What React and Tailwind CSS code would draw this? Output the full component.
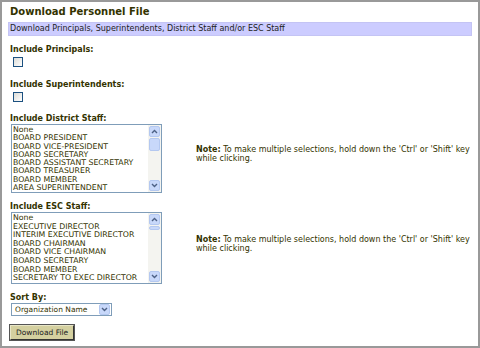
import React from 'react';

const districtStaff = [
  'None',
  'BOARD PRESIDENT',
  'BOARD VICE-PRESIDENT',
  'BOARD SECRETARY',
  'BOARD ASSISTANT SECRETARY',
  'BOARD TREASURER',
  'BOARD MEMBER',
  'AREA SUPERINTENDENT',
];

const escStaff = [
  'None',
  'EXECUTIVE DIRECTOR',
  'INTERIM EXECUTIVE DIRECTOR',
  'BOARD CHAIRMAN',
  'BOARD VICE CHAIRMAN',
  'BOARD SECRETARY',
  'BOARD MEMBER',
  'SECRETARY TO EXEC DIRECTOR',
];

const Arrow = ({ up }) => (
  <div className="flex h-[11px] w-[11px] items-center justify-center rounded-[2px] border border-[#b4c8f0] bg-[#c8d8fa]">
    <svg width="7" height="5" viewBox="0 0 7 5">
      <path d={up ? 'M1 4 L3.5 1.5 L6 4' : 'M1 1 L3.5 3.5 L6 1'} stroke="#4d6185" strokeWidth="1.4" fill="none" />
    </svg>
  </div>
);

const ListBox = ({ items, tall, smallThumb }) => (
  <div className={`flex w-[151px] border border-[#7f9db9] bg-white ${tall ? 'h-[72px]' : 'h-[69px]'}`}>
    <div className="flex-1 overflow-hidden pl-[1px] pt-[1px]">
      {items.map((item) => (
        <div
          key={item}
          className={`whitespace-nowrap text-[7.8px] text-[#333300] ${tall ? 'h-[8.6px] leading-[8.6px]' : 'h-[8.3px] leading-[8.3px]'}`}
        >
          {item}
        </div>
      ))}
    </div>
    <div className="flex w-[13px] flex-col bg-[#f4f4f0] px-[1px] py-[1px]">
      <Arrow up />
      <div className={`mt-[1px] w-[11px] rounded-[2px] border border-[#b4c8f0] bg-[#c8d8fa] ${smallThumb ? 'h-[4px]' : 'h-[13px]'}`} />
      <div className="flex-1" />
      <Arrow />
    </div>
  </div>
);

const Checkbox = () => (
  <div className="ml-[3px] mt-[2px] h-[10px] w-[10px] border border-[#1c5180] bg-gradient-to-br from-[#dcdcd7] to-white" />
);

const Label = ({ children }) => (
  <div className="text-[8px] font-bold leading-[10px] text-[#333300]">{children}</div>
);

const Note = () => (
  <div className="text-[8px] leading-[9px] text-[#333300]">
    <span className="font-bold">Note:</span> To make multiple selections, hold down the 'Ctrl' or 'Shift' key
    <br />
    while clicking.
  </div>
);

export default function App() {
  return (
    <div className="h-[348px] w-[480px] border-2 border-[#999999] bg-white font-['DejaVu_Sans',sans-serif]">
      <div className="px-[6px] pt-[3px]">
        <div className="pl-[2px] text-[10px] font-bold leading-[14px] text-[#333300]">Download Personnel File</div>
        <div className="mt-[3px] h-[14px] border border-[#c4c4f4] bg-[#ccccff] pl-[1px] text-[8px] leading-[12px] text-[#222222]">
          Download Principals, Superintendents, District Staff and/or ESC Staff
        </div>

        <div className="pl-[2px]">
          <div className="mt-[9px]">
            <Label>Include Principals:</Label>
            <Checkbox />
          </div>

          <div className="mt-[13px]">
            <Label>Include Superintendents:</Label>
            <Checkbox />
          </div>

          <div className="mt-[12px]">
            <Label>Include District Staff:</Label>
            <div className="flex items-center">
              <div className="ml-[1px]">
                <ListBox items={districtStaff} />
              </div>
              <div className="mb-[10px] ml-[34px]">
                <Note />
              </div>
            </div>
          </div>

          <div className="mt-[9px]">
            <Label>Include ESC Staff:</Label>
            <div className="flex items-center">
              <div className="ml-[1px]">
                <ListBox items={escStaff} tall smallThumb />
              </div>
              <div className="mb-[8px] ml-[34px]">
                <Note />
              </div>
            </div>
          </div>

          <div className="mt-[9px]">
            <Label>Sort By:</Label>
            <div className="ml-[1px] flex h-[13px] w-[101px] items-center border border-[#7f9db9] bg-white">
              <div className="flex-1 pl-[3px] text-[7.5px] leading-[11px] text-[#333300]">Organization Name</div>
              <div className="mr-[1px]">
                <Arrow />
              </div>
            </div>
          </div>

          <div className="mt-[9px] flex">
            <button className="h-[15px] border border-t-[#e8e6c8] border-l-[#e8e6c8] border-r-[#333333] border-b-[#333333] bg-[#d4d0a0] px-[5px] text-[7.5px] leading-[12px] text-[#222222] outline outline-1 outline-[#555555]">
              Download File
            </button>
          </div>
        </div>
      </div>
    </div>
  );
}
